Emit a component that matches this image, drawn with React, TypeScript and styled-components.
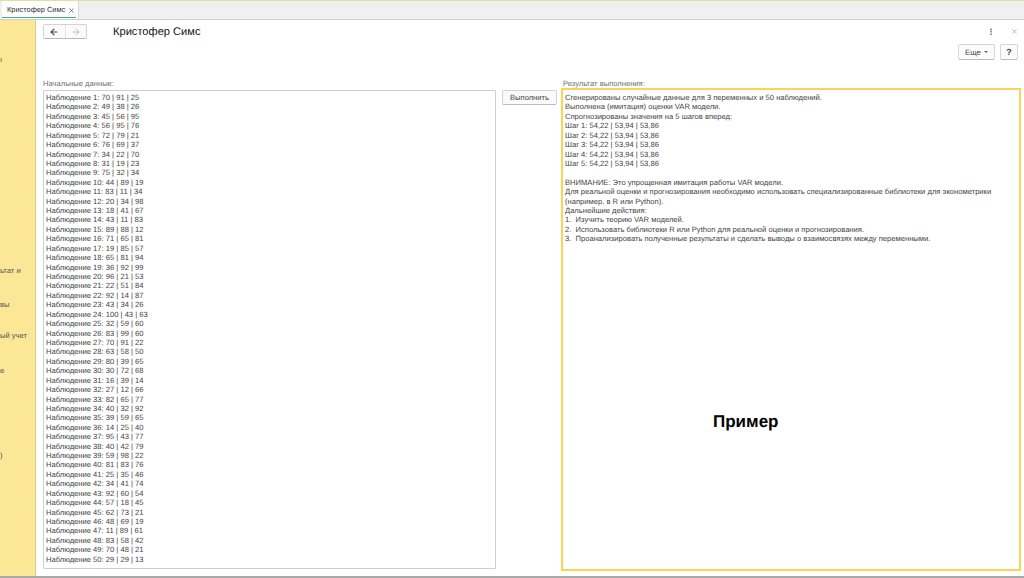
import React from "react";
import styled, { createGlobalStyle } from "styled-components";
import { ArrowLeft, ArrowRight, X } from "lucide-react";

const Global = createGlobalStyle`
  html, body { margin: 0; padding: 0; background: #fff; }
  #root { width: 1024px; height: 578px; overflow: hidden; }
  * { box-sizing: border-box; }
`;

const Page = styled.div`
  width: 1024px;
  height: 578px;
  display: flex;
  flex-direction: column;
  font-family: "Liberation Sans", Arial, sans-serif;
  text-rendering: geometricPrecision;
  color: #444;
  border-bottom: 2px solid #a8a8a8;
  overflow: hidden;
`;

const TabBar = styled.div`
  height: 20px;
  flex: none;
  display: flex;
  align-items: flex-start;
  padding-left: 2px;
  background: #f0f0f0;
  border-top: 1px solid #e6dca0;
  border-bottom: 1px solid #cfcfcf;
`;

const Tab = styled.div`
  width: 77px;
  height: 18px;
  display: flex;
  align-items: flex-start;
  justify-content: space-between;
  padding: 4px 3px 0 5px;
  background: #fff;
  border-right: 1px solid #d8d8d8;
  font-size: 7.4px;
  line-height: 10px;
  color: #333;
  white-space: nowrap;
  position: relative;
  &::after {
    content: "";
    position: absolute;
    left: 0;
    right: 2px;
    bottom: 1px;
    height: 1px;
    background: #3fb27f;
  }
`;

const Body = styled.div`
  flex: 1;
  display: flex;
  min-height: 0;
`;

const Sidebar = styled.div`
  width: 36px;
  flex: none;
  background: #fbe795;
  border-right: 1px solid #dccb82;
  position: relative;
  overflow: hidden;
`;

const SideText = styled.span<{ $top: number }>`
  position: absolute;
  left: 0;
  top: ${(p) => p.$top}px;
  font-size: 7.6px;
  line-height: 10px;
  color: #555;
  white-space: nowrap;
`;

const Main = styled.div`
  flex: 1;
  min-width: 0;
  display: flex;
  flex-direction: column;
  padding: 4px 3px 5px 7px;
`;

const HeaderRow = styled.div`
  height: 16px;
  flex: none;
  display: flex;
  align-items: flex-start;
`;

const NavGroup = styled.div`
  width: 44px;
  height: 15px;
  display: flex;
  border: 1px solid #d4d4d4;
  border-bottom-color: #b8b8b8;
  border-radius: 2px;
  background: #fbfbfb;
`;

const NavButton = styled.div`
  flex: 1;
  display: flex;
  align-items: center;
  justify-content: center;
  & + & { border-left: 1px solid #e4e4e4; }
`;

const Title = styled.h1`
  margin: 1px 0 0 26px;
  font-size: 11.1px;
  font-weight: 400;
  line-height: 15px;
  color: #111;
  flex: 1;
`;

const WindowTools = styled.div`
  width: 28px;
  display: flex;
  align-items: center;
  justify-content: space-between;
  height: 14px;
  margin-right: 3px;
  padding-top: 1px;
`;

const Dots = styled.div`
  width: 2px;
  height: 7px;
  background: radial-gradient(circle, #777 0.9px, transparent 1px) 0 0 / 2px 2.5px repeat-y;
`;

const CommandRow = styled.div`
  height: 16px;
  margin-top: 4px;
  flex: none;
  display: flex;
  justify-content: flex-end;
  gap: 5px;
  padding-right: 3px;
`;

const CommandButton = styled.div<{ $w: number; $strong?: boolean }>`
  width: ${(p) => p.$w}px;
  height: 16px;
  display: flex;
  align-items: center;
  justify-content: center;
  gap: 3px;
  font-size: ${(p) => (p.$strong ? 9 : 7.8)}px;
  font-weight: ${(p) => (p.$strong ? 700 : 400)};
  background: #fbfbfb;
  border: 1px solid #d6d6d6;
  border-bottom-color: #bcbcbc;
  border-radius: 2px;
  color: #444;
`;

const Caret = styled.span`
  width: 0;
  height: 0;
  border-left: 2px solid transparent;
  border-right: 2px solid transparent;
  border-top: 2px solid #666;
`;

const Content = styled.div`
  flex: 1;
  min-height: 0;
  margin-top: 18px;
  display: flex;
  position: relative;
`;

const Column = styled.div<{ $w: number }>`
  width: ${(p) => p.$w}px;
  flex: none;
  display: flex;
  flex-direction: column;
`;

const Label = styled.div<{ $gap: number; $indent: number }>`
  height: 10px;
  margin: 1px 0 ${(p) => p.$gap}px ${(p) => p.$indent}px;
  font-size: 7.6px;
  line-height: 10px;
  color: #6f6f6f;
`;

const InputBox = styled.div`
  flex: 1;
  margin-bottom: 2px;
  padding: 2px 2px;
  border: 1px solid #cfcfcf;
  border-radius: 1px;
  font-size: 7.6px;
  line-height: 9.43px;
  white-space: pre;
`;

const ResultBox = styled.div`
  flex: 1;
  padding: 3px 2px;
  border: 2px solid #fcd452;
  font-size: 7.6px;
  line-height: 9.43px;
  white-space: pre;
`;

const Line = styled.div`
  height: 9.43px;
`;

const ActionColumn = styled.div`
  width: 65px;
  flex: none;
  padding: 12px 4px 0 6px;
`;

const ActionButton = styled.div`
  width: 55px;
  height: 15px;
  display: flex;
  align-items: center;
  justify-content: center;
  font-size: 7.6px;
  background: #fafafa;
  border: 1px solid #d4d4d4;
  border-bottom-color: #bcbcbc;
  border-radius: 2px;
  color: #444;
`;

const Watermark = styled.div`
  position: absolute;
  left: 670px;
  top: 334px;
  font-size: 17px;
  font-weight: 700;
  line-height: 20px;
  color: #000;
`;

const triples = [
  "70 | 91 | 25", "49 | 38 | 26", "45 | 56 | 95", "56 | 95 | 76", "72 | 79 | 21",
  "76 | 69 | 37", "34 | 22 | 70", "31 | 19 | 23", "75 | 32 | 34", "44 | 89 | 19",
  "83 | 11 | 34", "20 | 34 | 98", "18 | 41 | 67", "43 | 11 | 83", "89 | 88 | 12",
  "71 | 65 | 81", "19 | 85 | 57", "65 | 81 | 94", "36 | 92 | 99", "96 | 21 | 53",
  "22 | 51 | 84", "92 | 14 | 87", "43 | 34 | 26", "100 | 43 | 63", "32 | 59 | 60",
  "83 | 99 | 60", "70 | 91 | 22", "63 | 58 | 50", "80 | 39 | 65", "30 | 72 | 68",
  "16 | 39 | 14", "27 | 12 | 66", "82 | 65 | 77", "40 | 32 | 92", "39 | 59 | 65",
  "14 | 25 | 40", "95 | 43 | 77", "40 | 42 | 79", "59 | 98 | 22", "81 | 83 | 76",
  "25 | 35 | 46", "34 | 41 | 74", "92 | 60 | 54", "57 | 18 | 45", "62 | 73 | 21",
  "48 | 69 | 19", "11 | 89 | 61", "83 | 58 | 42", "70 | 48 | 21", "29 | 29 | 13",
];

const result = [
  "Сгенерированы случайные данные для 3 переменных и 50 наблюдений.",
  "Выполнена (имитация) оценки VAR модели.",
  "Спрогнозированы значения на 5 шагов вперед:",
  "Шаг 1: 54,22 | 53,94 | 53,86",
  "Шаг 2: 54,22 | 53,94 | 53,86",
  "Шаг 3: 54,22 | 53,94 | 53,86",
  "Шаг 4: 54,22 | 53,94 | 53,86",
  "Шаг 5: 54,22 | 53,94 | 53,86",
  "",
  "ВНИМАНИЕ: Это упрощенная имитация работы VAR модели.",
  "Для реальной оценки и прогнозирования необходимо использовать специализированные библиотеки для эконометрики",
  "(например, в R или Python).",
  "Дальнейшие действия:",
  "1.  Изучить теорию VAR моделей.",
  "2.  Использовать библиотеки R или Python для реальной оценки и прогнозирования.",
  "3.  Проанализировать полученные результаты и сделать выводы о взаимосвязях между переменными.",
];

const sideItems: [number, string][] = [
  [35, "ı"],
  [246, "ьтат и"],
  [280, "вы"],
  [311, "ый учет"],
  [346, "е"],
  [431, ")"],
];

export default function App() {
  return (
    <Page>
      <Global />
      <TabBar>
        <Tab>
          <span>Кристофер Симс</span>
          <X size={7} strokeWidth={2.5} color="#555" style={{ marginTop: 2 }} />
        </Tab>
      </TabBar>
      <Body>
        <Sidebar>
          {sideItems.map(([top, text]) => (
            <SideText key={top} $top={top}>{text}</SideText>
          ))}
        </Sidebar>
        <Main>
          <HeaderRow>
            <NavGroup>
              <NavButton><ArrowLeft size={10} strokeWidth={2.6} color="#444" /></NavButton>
              <NavButton><ArrowRight size={10} strokeWidth={2.2} color="#b5b5b5" /></NavButton>
            </NavGroup>
            <Title>Кристофер Симс</Title>
            <WindowTools>
              <Dots />
              <X size={7} strokeWidth={2} color="#8a8a8a" />
            </WindowTools>
          </HeaderRow>
          <CommandRow>
            <CommandButton $w={37}>Еще <Caret /></CommandButton>
            <CommandButton $w={18} $strong>?</CommandButton>
          </CommandRow>
          <Content>
            <Column $w={453}>
              <Label $gap={1} $indent={0}>Начальные данные:</Label>
              <InputBox>
                {triples.map((t, i) => (
                  <Line key={i}>{`Наблюдение ${i + 1}: ${t}`}</Line>
                ))}
              </InputBox>
            </Column>
            <ActionColumn>
              <ActionButton>Выполнить</ActionButton>
            </ActionColumn>
            <Column $w={460}>
              <Label $gap={-1} $indent={2}>Результат выполнения:</Label>
              <ResultBox>
                {result.map((t, i) => (
                  <Line key={i}>{t}</Line>
                ))}
              </ResultBox>
            </Column>
            <Watermark>Пример</Watermark>
          </Content>
        </Main>
      </Body>
    </Page>
  );
}
